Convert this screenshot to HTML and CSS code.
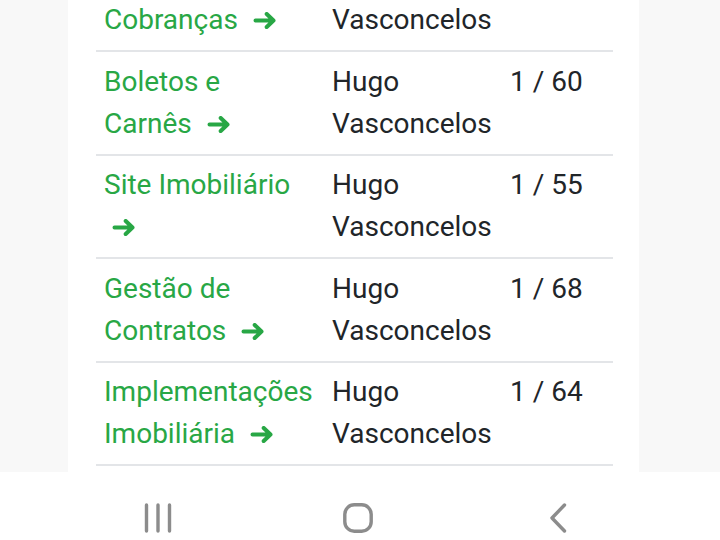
FILE: index.html
```html
<!DOCTYPE html>
<html lang="pt-BR">
<head>
<meta charset="utf-8">
<title>Tabela</title>
<link rel="stylesheet" href="styles.css">
</head>
<body>
<div class="screen">
  <main class="content">
    <section class="card">
      <div class="table">
        <div class="row">
          <div class="cell name">Gestão de Cobranças <svg class="arrow" viewBox="0 0 23 17"><path d="M2 8.5H20M13.2 2L20 8.5L13.2 15"/></svg></div>
          <div class="cell">Hugo Vasconcelos</div>
          <div class="cell num">1 / 72</div>
        </div>
        <div class="row">
          <div class="cell name">Boletos e Carnês <svg class="arrow" viewBox="0 0 23 17"><path d="M2 8.5H20M13.2 2L20 8.5L13.2 15"/></svg></div>
          <div class="cell">Hugo Vasconcelos</div>
          <div class="cell num">1 / 60</div>
        </div>
        <div class="row">
          <div class="cell name">Site Imobiliário <svg class="arrow" viewBox="0 0 23 17"><path d="M2 8.5H20M13.2 2L20 8.5L13.2 15"/></svg></div>
          <div class="cell">Hugo Vasconcelos</div>
          <div class="cell num">1 / 55</div>
        </div>
        <div class="row">
          <div class="cell name">Gestão de Contratos <svg class="arrow" viewBox="0 0 23 17"><path d="M2 8.5H20M13.2 2L20 8.5L13.2 15"/></svg></div>
          <div class="cell">Hugo Vasconcelos</div>
          <div class="cell num">1 / 68</div>
        </div>
        <div class="row">
          <div class="cell name">Implementações Imobiliária <svg class="arrow" viewBox="0 0 23 17"><path d="M2 8.5H20M13.2 2L20 8.5L13.2 15"/></svg></div>
          <div class="cell">Hugo Vasconcelos</div>
          <div class="cell num">1 / 64</div>
        </div>
      </div>
    </section>
  </main>
  <nav class="navbar">
    <div class="nav-btn">
      <svg width="28" height="30" viewBox="0 0 28 30"><path d="M2.5 2V28M14 2V28M25.5 2V28"/></svg>
    </div>
    <div class="nav-btn">
      <svg width="30" height="30" viewBox="0 0 30 30"><rect x="1.8" y="1.8" width="26.4" height="26.4" rx="9.5"/></svg>
    </div>
    <div class="nav-btn">
      <svg width="18" height="30" viewBox="0 0 18 30"><path d="M15.5 2L3 15L15.5 28"/></svg>
    </div>
  </nav>
</div>
</body>
</html>
```

FILE: styles.css
```css
html, body {
  margin: 0;
  padding: 0;
}

body {
  font-family: Roboto, "Noto Sans", sans-serif;
  background: #ffffff;
  color: #212529;
}

.screen {
  width: 720px;
  height: 540px;
  display: flex;
  flex-direction: column;
  overflow: hidden;
}

.content {
  height: 472px;
  flex: none;
  overflow: hidden;
  background: #f8f8f8;
}

.card {
  margin: -51.5px 81px 0 68px;
  background: #ffffff;
  padding: 0 26px 40px 28px;
}

.table {
  display: flex;
  flex-direction: column;
}

.row {
  display: grid;
  grid-template-columns: 228px 178px 1fr;
  padding: 8.75px 0;
  border-bottom: 2px solid #e3e5e8;
  font-size: 28px;
  line-height: 42px;
}

.cell {
  padding: 0 8px;
}

.name {
  color: #28a745;
  padding-right: 10px;
}

.arrow {
  width: 24px;
  height: 17px;
  margin-left: 8px;
  vertical-align: 0;
  fill: none;
  stroke: #28a745;
  stroke-width: 4;
  stroke-linecap: round;
  stroke-linejoin: round;
}

.navbar {
  flex: 1;
  background: #ffffff;
  display: flex;
  justify-content: center;
  align-items: flex-start;
  gap: 140px;
  padding: 31px 4px 0 0;
}

.nav-btn {
  width: 60px;
  height: 30px;
  display: flex;
  justify-content: center;
}

.nav-btn svg {
  fill: none;
  stroke: #8c8c8c;
  stroke-width: 3.4;
  stroke-linecap: round;
  stroke-linejoin: round;
}
```
